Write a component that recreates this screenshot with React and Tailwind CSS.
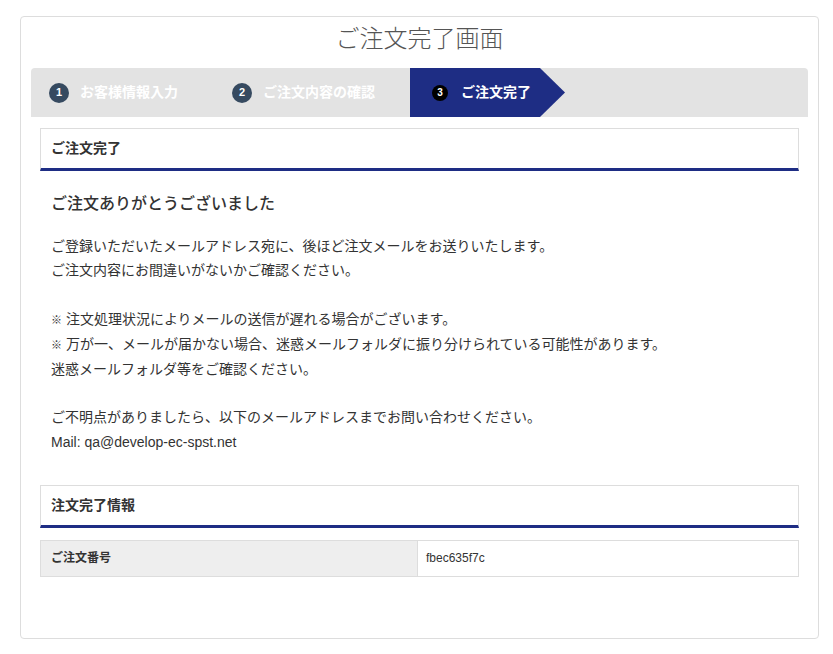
export default function App() {
  const font = { fontFamily: '"Liberation Sans", "Noto Sans CJK JP", sans-serif' };
  return (
    <div className="min-h-[654px] bg-white pt-[16px] text-[#333]" style={font}>
      <div className="ml-[20px] w-[799px] rounded-[4px] border border-[#ddd] bg-white pb-[61px]">
        <h1 className="pt-[7px] pb-[14px] text-center text-[24px] leading-[30px] font-light text-[#555]">
          ご注文完了画面
        </h1>

        <div className="mx-[10px] flex h-[49px] items-stretch rounded-t-[4px] bg-[#e3e3e3]">
          <div className="flex w-[184px] items-center gap-[11px] pl-[18px]">
            <span className="flex h-[20px] w-[20px] items-center justify-center rounded-full bg-[#364a60] text-[11px] font-bold text-white">1</span>
            <span className="text-[14px] font-bold text-white">お客様情報入力</span>
          </div>
          <div className="flex w-[195px] items-center gap-[11px] pl-[17px]">
            <span className="flex h-[20px] w-[20px] items-center justify-center rounded-full bg-[#364a60] text-[11px] font-bold text-white">2</span>
            <span className="text-[14px] font-bold text-white">ご注文内容の確認</span>
          </div>
          <div className="flex w-[130px] items-center gap-[13px] bg-[#1e2d84] pl-[22px]">
            <span className="flex h-[16px] w-[16px] items-center justify-center rounded-full bg-black text-[10px] font-bold text-white">3</span>
            <span className="text-[14px] font-bold text-white">ご注文完了</span>
          </div>
          <svg width="25" height="49" viewBox="0 0 25 49" className="block">
            <polygon points="0,0 25,24.5 0,49" fill="#1e2d84" />
          </svg>
        </div>

        <div className="mx-[19px] mt-[11px]">
          <div className="flex h-[43px] items-center border border-b-[3px] border-[#ddd] border-b-[#1e2d84] px-[10px]">
            <h2 className="text-[14px] font-bold">ご注文完了</h2>
          </div>
          <div className="px-[11px]">
            <h3 className="mt-[21px] text-[16px] leading-[24px] font-medium">ご注文ありがとうございました</h3>
            <p className="mt-[18px] text-[14px] leading-[24.2px]">
              ご登録いただいたメールアドレス宛に、後ほど注文メールをお送りいたします。<br />
              ご注文内容にお間違いがないかご確認ください。<br />
              <br />
              <span className="text-[11px]">※</span> 注文処理状況によりメールの送信が遅れる場合がございます。<br />
              <span className="text-[11px]">※</span> 万が一、メールが届かない場合、迷惑メールフォルダに振り分けられている可能性があります。<br />
              迷惑メールフォルダ等をご確認ください。<br />
              <br />
              ご不明点がありましたら、以下のメールアドレスまでお問い合わせください。<br />
              Mail: qa@develop-ec-spst.net
            </p>
          </div>

          <div className="mt-[31px] flex h-[43px] items-center border border-b-[3px] border-[#ddd] border-b-[#1e2d84] px-[10px]">
            <h2 className="text-[14px] font-bold">注文完了情報</h2>
          </div>
          <div className="mt-[12px] flex h-[37px] border border-[#ddd]">
            <div className="flex w-[377px] items-center border-r border-[#ddd] bg-[#eee] pl-[10px] text-[12px] font-bold">
              ご注文番号
            </div>
            <div className="flex flex-1 items-center pl-[8px] text-[12px]">fbec635f7c</div>
          </div>
        </div>
      </div>
    </div>
  );
}
